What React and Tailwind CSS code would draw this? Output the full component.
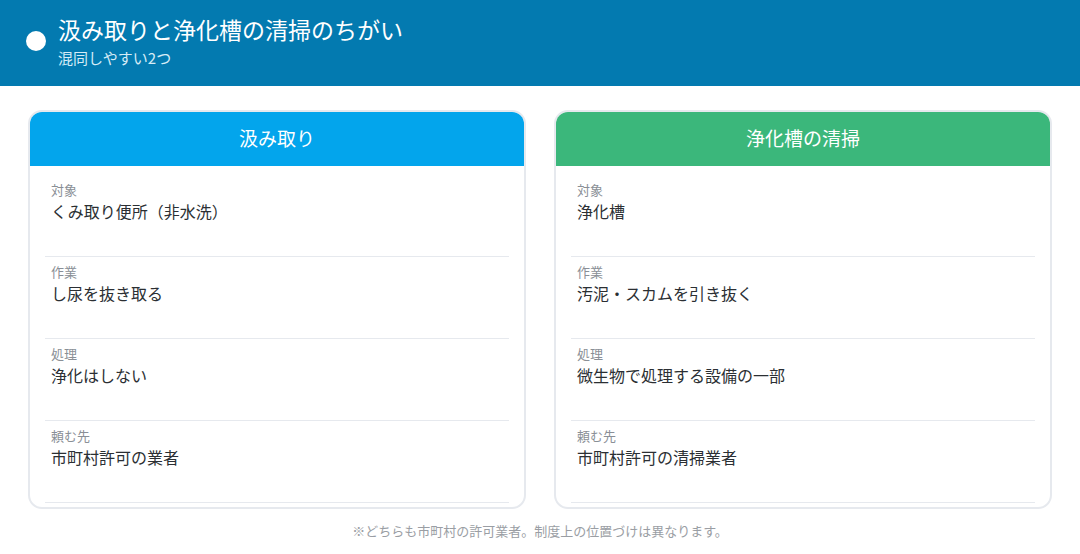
import React from "react";

const font = { fontFamily: '"Noto Sans CJK JP", "Noto Sans", sans-serif' };

const cards = [
  {
    title: "汲み取り",
    head: "bg-[#03a5ec]",
    rows: [
      ["対象", "くみ取り便所（非水洗）"],
      ["作業", "し尿を抜き取る"],
      ["処理", "浄化はしない"],
      ["頼む先", "市町村許可の業者"],
    ],
  },
  {
    title: "浄化槽の清掃",
    head: "bg-[#3bb77b]",
    rows: [
      ["対象", "浄化槽"],
      ["作業", "汚泥・スカムを引き抜く"],
      ["処理", "微生物で処理する設備の一部"],
      ["頼む先", "市町村許可の清掃業者"],
    ],
  },
];

function Card({ c }) {
  return (
    <div className="flex-1 rounded-[14px] border-2 border-[#e6e9ee] overflow-hidden bg-white">
      <div className={`${c.head} h-[56px] -mx-[2px] -mt-[2px] flex items-center justify-center text-white text-[19px]`}>
        {c.title}
      </div>
      <div className="pt-[9px] pb-[4px]">
        {c.rows.map(([k, v]) => (
          <div key={k} className="mx-[15px] px-[6px] pt-[5px] h-[82px] border-b border-[#e6e9ee]">
            <div className="text-[13px] leading-[20px] text-[#8a8f96]">{k}</div>
            <div className="text-[16px] leading-[23px] text-[#2b2f33]">{v}</div>
          </div>
        ))}
      </div>
    </div>
  );
}

export default function App() {
  return (
    <div style={font} className="w-[1080px] h-[554px] bg-white overflow-hidden">
      <div className="h-[86px] bg-[#037ab0] flex items-start pl-[26px] pt-[14px]">
        <div className="w-[20px] h-[20px] rounded-full bg-white mr-[12px] mt-[17px] shrink-0" />
        <div className="flex flex-col">
          <div className="text-white text-[23px] leading-[30px]">汲み取りと浄化槽の清掃のちがい</div>
          <div className="text-[#d6ecf7] text-[15px] leading-[20px] mt-[4px]">混同しやすい2つ</div>
        </div>
      </div>
      <div className="flex gap-[28px] px-[28px] pt-[24px]">
        {cards.map((c) => (
          <Card key={c.title} c={c} />
        ))}
      </div>
      <div className="text-center text-[13px] text-[#9a9ea4] mt-[12px]">
        ※どちらも市町村の許可業者。制度上の位置づけは異なります。
      </div>
    </div>
  );
}
